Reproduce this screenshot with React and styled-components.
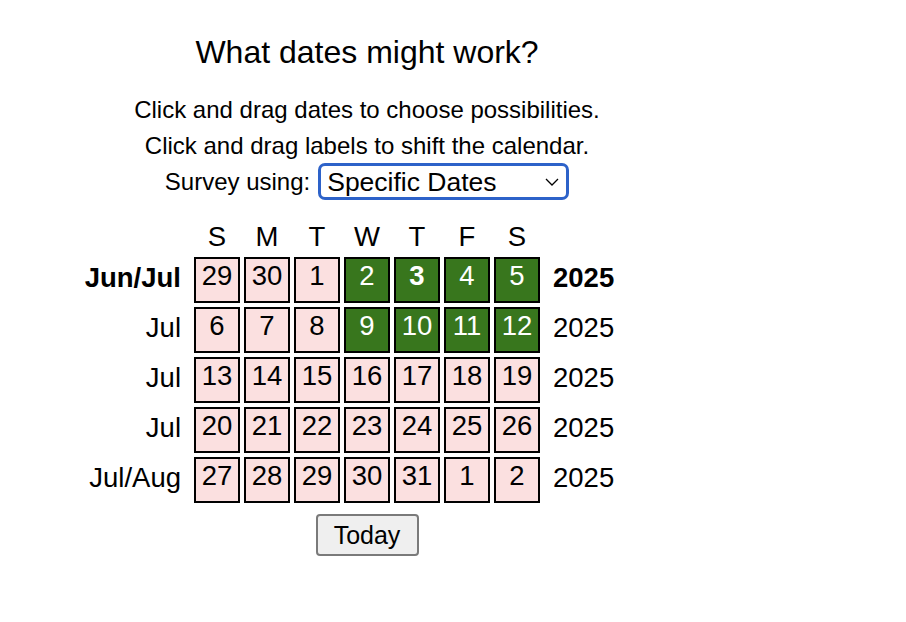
import React, { useState } from 'react';
import styled, { createGlobalStyle } from 'styled-components';

const GlobalStyle = createGlobalStyle`
  html, body {
    margin: 0;
    padding: 0;
    background: #ffffff;
    font-family: "Liberation Sans", Arial, Helvetica, sans-serif;
    color: #000000;
  }
`;

const Page = styled.div`
  width: 734px;
  text-align: center;
  padding-top: 34px;
`;

const Title = styled.h1`
  margin: 0;
  font-size: 32px;
  font-weight: normal;
  line-height: normal;
`;

const Intro = styled.div`
  margin-top: 21px;
`;

const Line = styled.div`
  font-size: 24px;
  line-height: 36px;
`;

const SurveyRow = styled.div`
  display: flex;
  justify-content: center;
  align-items: center;
  gap: 8px;
  margin-top: -1px;
  font-size: 24px;
`;

const SelectWrap = styled.span`
  position: relative;
  display: inline-block;
`;

const Select = styled.select`
  appearance: none;
  -webkit-appearance: none;
  width: 251px;
  height: 37px;
  box-sizing: border-box;
  border: 3px solid #2d62c9;
  border-radius: 7px;
  background: #ffffff;
  padding: 0 30px 0 6px;
  font-family: "Liberation Sans", Arial, Helvetica, sans-serif;
  font-size: 26.5px;
  color: #000000;
  outline: none;
`;

const Chevron = styled.svg`
  position: absolute;
  right: 10px;
  top: 15px;
  pointer-events: none;
`;

const Grid = styled.div`
  display: grid;
  grid-template-columns: 1fr repeat(7, 46px) 1fr;
  grid-auto-rows: 46px;
  grid-template-rows: 32px;
  gap: 4px;
  margin-top: 21px;
  font-size: 27.5px;
  line-height: normal;
`;

const DayHead = styled.div`
  text-align: center;
`;

const Spacer = styled.div``;

const SideLabel = styled.div`
  padding-top: 5px;
  text-align: ${(p) => (p.$side === 'left' ? 'right' : 'left')};
  padding-right: ${(p) => (p.$side === 'left' ? '9px' : '0')};
  padding-left: ${(p) => (p.$side === 'right' ? '9px' : '0')};
  font-weight: ${(p) => (p.$bold ? 'bold' : 'normal')};
  cursor: grab;
  user-select: none;
`;

const Cell = styled.div`
  box-sizing: border-box;
  border: 2px solid #000000;
  background: ${(p) => (p.$picked ? '#38761d' : '#fbe0e0')};
  color: ${(p) => (p.$picked ? '#ffffff' : '#000000')};
  font-weight: ${(p) => (p.$today ? 'bold' : 'normal')};
  text-align: center;
  padding-top: 1px;
  cursor: pointer;
  user-select: none;
`;

const ButtonRow = styled.div`
  margin-top: 11px;
`;

const TodayButton = styled.button`
  width: 103px;
  height: 42px;
  box-sizing: border-box;
  background: #efefef;
  border: 2px solid #7a7a7a;
  border-radius: 4px;
  font-family: "Liberation Sans", Arial, Helvetica, sans-serif;
  font-size: 25px;
  color: #000000;
  padding: 0;
`;

const weeks = [
  { month: 'Jun/Jul', year: '2025', bold: true, days: [29, 30, 1, 2, 3, 4, 5] },
  { month: 'Jul', year: '2025', days: [6, 7, 8, 9, 10, 11, 12] },
  { month: 'Jul', year: '2025', days: [13, 14, 15, 16, 17, 18, 19] },
  { month: 'Jul', year: '2025', days: [20, 21, 22, 23, 24, 25, 26] },
  { month: 'Jul/Aug', year: '2025', days: [27, 28, 29, 30, 31, 1, 2] },
];

const dayNames = ['S', 'M', 'T', 'W', 'T', 'F', 'S'];

const App = () => {
  const [picked, setPicked] = useState(
    new Set(['0-3', '0-4', '0-5', '0-6', '1-3', '1-4', '1-5', '1-6'])
  );

  const toggle = (key) => {
    const next = new Set(picked);
    if (next.has(key)) next.delete(key);
    else next.add(key);
    setPicked(next);
  };

  return (
    <Page>
      <GlobalStyle />
      <Title>What dates might work?</Title>
      <Intro>
        <Line>Click and drag dates to choose possibilities.</Line>
        <Line>Click and drag labels to shift the calendar.</Line>
      </Intro>
      <SurveyRow>
        <span>Survey using:</span>
        <SelectWrap>
          <Select defaultValue="dates">
            <option value="dates">Specific Dates</option>
            <option value="days">Days of the Week</option>
          </Select>
          <Chevron width="14" height="8" viewBox="0 0 14 8">
            <path d="M1 1 L7 7 L13 1" fill="none" stroke="#000" strokeWidth="1.3" />
          </Chevron>
        </SelectWrap>
      </SurveyRow>

      <Grid>
        <Spacer />
        {dayNames.map((d, i) => (
          <DayHead key={i}>{d}</DayHead>
        ))}
        <Spacer />
        {weeks.map((w, wi) => (
          <React.Fragment key={wi}>
            <SideLabel $side="left" $bold={w.bold}>{w.month}</SideLabel>
            {w.days.map((d, di) => {
              const key = `${wi}-${di}`;
              return (
                <Cell
                  key={key}
                  $picked={picked.has(key)}
                  $today={key === '0-4'}
                  onClick={() => toggle(key)}
                >
                  {d}
                </Cell>
              );
            })}
            <SideLabel $side="right" $bold={w.bold}>{w.year}</SideLabel>
          </React.Fragment>
        ))}
      </Grid>

      <ButtonRow>
        <TodayButton>Today</TodayButton>
      </ButtonRow>
    </Page>
  );
};

export default App;
